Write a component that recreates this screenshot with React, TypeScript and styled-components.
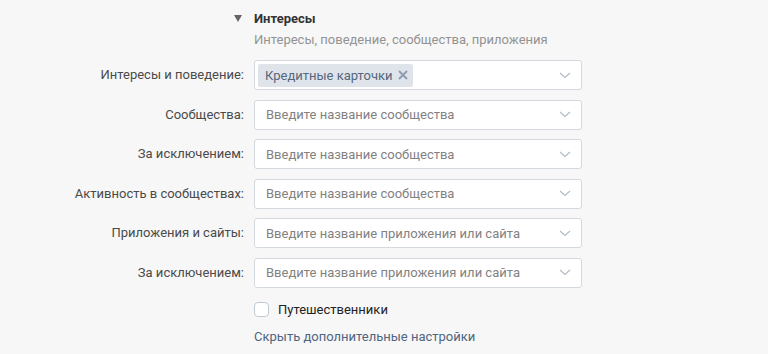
import React from "react";
import styled, { createGlobalStyle } from "styled-components";

const Global = createGlobalStyle`
  html, body { margin: 0; padding: 0; background: #f7f7f7; }
  body { font-family: Roboto, "Open Sans", Arial, sans-serif; font-size: 13px; -webkit-font-smoothing: antialiased; }
`;

const Page = styled.div`
  width: 768px;
  height: 354px;
  overflow: hidden;
  background: #f7f7f7;
  box-sizing: border-box;
  padding-top: 10px;
`;

const Grid = styled.div`
  display: grid;
  grid-template-columns: 244px 328px;
  column-gap: 10px;
  align-items: center;
`;

const HeaderTitle = styled.div`
  grid-column: 2;
  position: relative;
  font-weight: 700;
  font-size: 13px;
  color: #333;
  line-height: 18px;
`;

const Triangle = styled.span`
  position: absolute;
  left: -20px;
  top: 5px;
  width: 0;
  height: 0;
  border-left: 4px solid transparent;
  border-right: 4px solid transparent;
  border-top: 7px solid #656565;
`;

const Subtitle = styled.div`
  grid-column: 2;
  color: #939393;
  line-height: 18px;
  margin-top: 3px;
  margin-bottom: 11px;
`;

const Label = styled.div`
  grid-column: 1;
  text-align: right;
  color: #4a4a4a;
  line-height: 30px;
  height: 30px;
  margin-bottom: 9.5px;
`;

const Field = styled.div`
  grid-column: 2;
  height: 30px;
  box-sizing: border-box;
  background: #fff;
  border: 1px solid #d3d9de;
  border-radius: 3px;
  display: flex;
  align-items: center;
  padding: 0 8px 0 3px;
  margin-bottom: 9.5px;
`;

const Placeholder = styled.span`
  flex: 1;
  color: #828282;
  padding-left: 8px;
`;

const Tag = styled.span`
  display: inline-flex;
  align-items: center;
  gap: 5px;
  height: 23px;
  padding: 0 5px 0 7px;
  background: #dfe4ea;
  border-radius: 2px;
  color: #55677d;
`;

const Spacer = styled.span`
  flex: 1;
`;

const Chevron = () => (
  <svg width="12" height="7" viewBox="0 0 12 7" style={{ marginRight: 2 }}>
    <path d="M1 1 L6 5.5 L11 1" fill="none" stroke="#b5bdc6" strokeWidth="1.3" />
  </svg>
);

const Cross = () => (
  <svg width="10" height="10" viewBox="0 0 10 10">
    <path d="M1 1 L9 9 M9 1 L1 9" stroke="#8a9bb0" strokeWidth="1.8" />
  </svg>
);

const CheckRow = styled.label`
  grid-column: 2;
  display: flex;
  align-items: center;
  gap: 9px;
  color: #222;
  margin-top: 4px;
  height: 17px;
`;

const Box = styled.span`
  width: 13px;
  height: 13px;
  border: 1px solid #c1c9d1;
  border-radius: 4px;
  background: #fff;
`;

const Link = styled.a`
  grid-column: 2;
  color: #4f6580;
  margin-top: 10px;
  line-height: 18px;
  text-decoration: none;
`;

const rows: { label: string; placeholder?: string; tag?: string }[] = [
  { label: "Интересы и поведение:", tag: "Кредитные карточки" },
  { label: "Сообщества:", placeholder: "Введите название сообщества" },
  { label: "За исключением:", placeholder: "Введите название сообщества" },
  { label: "Активность в сообществах:", placeholder: "Введите название сообщества" },
  { label: "Приложения и сайты:", placeholder: "Введите название приложения или сайта" },
  { label: "За исключением:", placeholder: "Введите название приложения или сайта" },
];

export default function App() {
  return (
    <Page>
      <Global />
      <Grid>
        <HeaderTitle>
          <Triangle />
          Интересы
        </HeaderTitle>
        <Subtitle>Интересы, поведение, сообщества, приложения</Subtitle>
        {rows.map((r, i) => (
          <React.Fragment key={i}>
            <Label>{r.label}</Label>
            <Field>
              {r.tag ? (
                <>
                  <Tag>
                    {r.tag}
                    <Cross />
                  </Tag>
                  <Spacer />
                </>
              ) : (
                <Placeholder>{r.placeholder}</Placeholder>
              )}
              <Chevron />
            </Field>
          </React.Fragment>
        ))}
        <CheckRow>
          <Box />
          Путешественники
        </CheckRow>
        <Link>Скрыть дополнительные настройки</Link>
      </Grid>
    </Page>
  );
}
